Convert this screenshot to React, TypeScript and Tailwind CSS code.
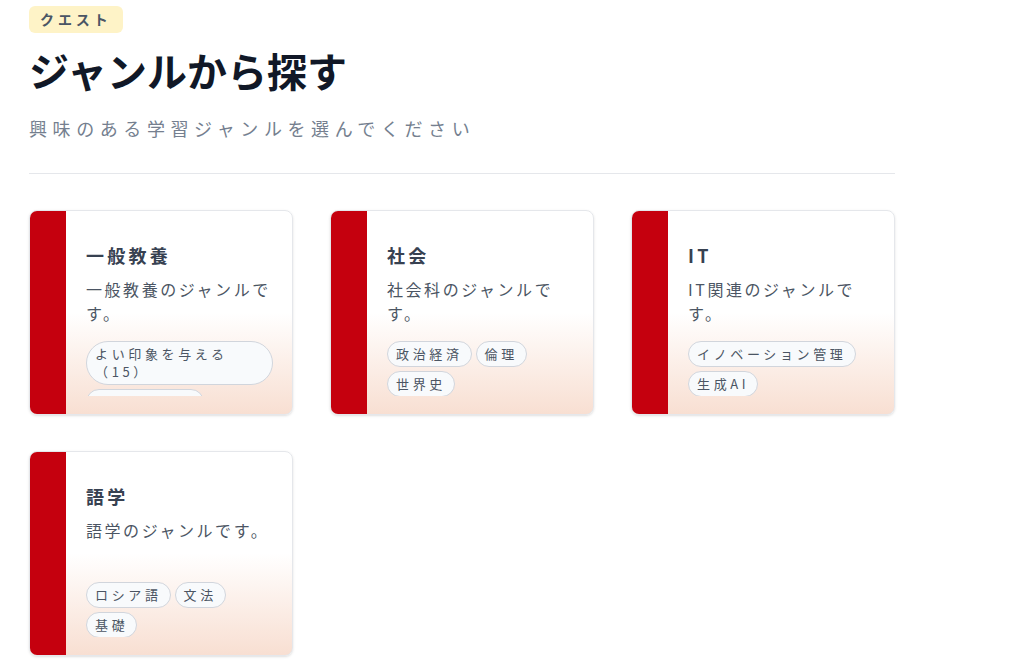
const genres = [
  {
    name: "一般教養",
    description: "一般教養のジャンルです。",
    tags: ["よい印象を与える（15）", "ビジネス文書"],
  },
  {
    name: "社会",
    description: "社会科のジャンルです。",
    tags: ["政治経済", "倫理", "世界史"],
  },
  {
    name: "IT",
    description: "IT関連のジャンルです。",
    tags: ["イノベーション管理", "生成AI"],
  },
  {
    name: "語学",
    description: "語学のジャンルです。",
    tags: ["ロシア語", "文法", "基礎"],
  },
];

type Genre = (typeof genres)[number];

const GenreCard = ({ genre }: { genre: Genre }) => {
  return (
    <div className="flex h-[205px] overflow-hidden rounded-lg border border-gray-200 bg-linear-to-b from-white from-50% to-[#f8dfd2] shadow-sm">
      <div className="w-[36px] shrink-0 bg-[#c5000e]" />
      <div className="flex min-w-0 flex-1 flex-col pt-[30px] pl-5 pr-[19px]">
        <h3 className="text-[18px] leading-7 font-bold tracking-[0.18em] text-[#374151]">
          {genre.name}
        </h3>
        <p className="mt-2 min-h-12 text-base leading-6 tracking-[0.16em] text-[#4b5563]">
          {genre.description}
        </p>
        {/* tag list is clipped to two rows, like the original */}
        <div className="mt-4 flex h-[55px] flex-wrap content-start gap-1 overflow-hidden">
          {genre.tags.map((tag) => (
            <span
              key={tag}
              className="rounded-full border border-gray-300 bg-slate-50 px-2 py-[3px] text-[13px] leading-[18px] tracking-[0.28em] text-[#4b5563]"
            >
              {tag}
            </span>
          ))}
        </div>
      </div>
    </div>
  );
};

export default function App() {
  return (
    <div className="min-h-[672px] bg-white font-['Noto_Sans_CJK_JP','Noto_Sans',sans-serif]">
      <div className="ml-[29px] w-[866px] pt-[6px]">
        <span className="inline-block rounded-md bg-[#fef3c7] px-[11px] py-1 text-sm leading-[19px] font-bold tracking-[0.28em] text-gray-600">
          クエスト
        </span>
        <h1 className="mt-[13px] text-[40px] leading-[48px] font-bold text-[#111827]">
          ジャンルから探す
        </h1>
        <p className="mt-5 text-lg leading-7 tracking-[0.31em] text-[#757f8f]">
          興味のある学習ジャンルを選んでください
        </p>
        <div className="mt-[31px] border-t border-gray-200" />

        <div className="mt-9 grid grid-cols-3 gap-x-[37px] gap-y-9">
          {genres.map((genre) => (
            <GenreCard key={genre.name} genre={genre} />
          ))}
        </div>
      </div>
    </div>
  );
}
